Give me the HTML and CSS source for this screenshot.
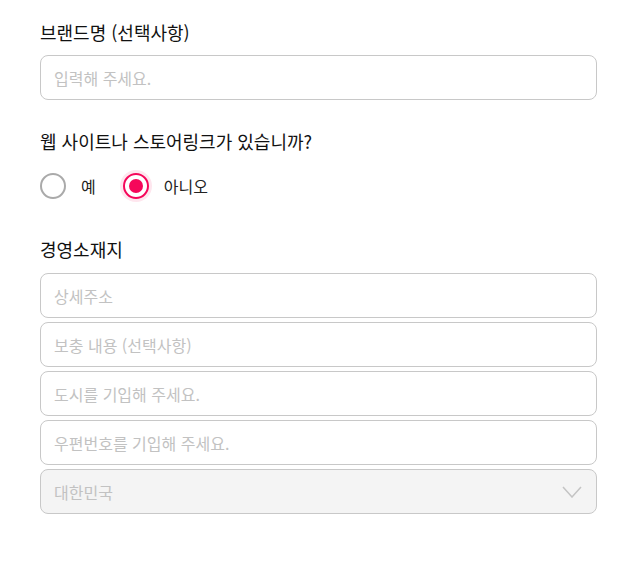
FILE: index.html
```html
<!DOCTYPE html>
<html lang="ko">
  <head>
    <meta charset="UTF-8" />
    <meta name="viewport" content="width=device-width, initial-scale=1.0" />
    <title>브랜드 정보</title>
    <link rel="stylesheet" href="styles.css">
  </head>
  <body>
    <form class="container">
      <div class="field">
        <label class="title" for="brand">브랜드명 (선택사항)</label>
        <input type="text" id="brand" class="input" placeholder="입력해 주세요." />
      </div>

      <div class="field field-radio">
        <p class="title">웹 사이트나 스토어링크가 있습니까?</p>
        <div class="radios">
          <label class="radio">
            <input type="radio" name="site" value="yes" />
            <span class="circle"></span>
            <span class="radio-text">예</span>
          </label>
          <label class="radio">
            <input type="radio" name="site" value="no" checked />
            <span class="circle"></span>
            <span class="radio-text">아니오</span>
          </label>
        </div>
      </div>

      <div class="field field-address">
        <p class="title">경영소재지</p>
        <div class="stack">
          <input type="text" class="input" placeholder="상세주소" />
          <input type="text" class="input" placeholder="보충 내용 (선택사항)" />
          <input type="text" class="input" placeholder="도시를 기입해 주세요." />
          <input type="text" class="input" placeholder="우편번호를 기입해 주세요." />
          <div class="select">
            <span>대한민국</span>
            <svg width="20" height="12" viewBox="0 0 20 12">
              <path d="M1 1 L10 11 L19 1" fill="none" stroke="#c4c4c4" stroke-width="1.5" />
            </svg>
          </div>
        </div>
      </div>
    </form>
  </body>
</html>
```

FILE: styles.css
```css
body {
  font-family: "Noto Sans CJK KR", "Noto Sans", sans-serif;
  background-color: #fff;
  color: #222;
  margin: 0;
  padding: 0;
}
.container {
  width: 557px;
  padding: 20px 0 0 40px;
}
.field {
  margin-bottom: 29px;
}
.field-radio {
  margin-bottom: 38px;
}
.title {
  display: block;
  margin: 0 0 11px;
  font-size: 18px;
  line-height: 24px;
  font-weight: 400;
  color: #111;
}
.field-radio .title {
  margin-bottom: 20px;
}
.field-address .title {
  margin-bottom: 12px;
}
.input {
  display: block;
  box-sizing: border-box;
  width: 100%;
  height: 45px;
  padding: 0 13px;
  border: 1px solid #c8c8c8;
  border-radius: 8px;
  font-family: inherit;
  font-size: 16px;
  color: #222;
  background: #fff;
  outline: none;
}
.input::placeholder {
  color: #c2c2c2;
}
.stack {
  display: flex;
  flex-direction: column;
  gap: 4px;
}
.select {
  box-sizing: border-box;
  height: 45px;
  padding: 0 14px 0 13px;
  border: 1px solid #c8c8c8;
  border-radius: 8px;
  background: #f4f4f4;
  display: flex;
  align-items: center;
  justify-content: space-between;
  font-size: 16px;
  color: #c2c2c2;
}
.radios {
  display: flex;
  gap: 27px;
  height: 26px;
}
.radio {
  display: flex;
  align-items: center;
  gap: 15px;
  font-size: 16px;
  color: #222;
  cursor: pointer;
}
.radio input {
  display: none;
}
.circle {
  box-sizing: border-box;
  width: 26px;
  height: 26px;
  border: 2px solid #aaa;
  border-radius: 50%;
  display: flex;
  align-items: center;
  justify-content: center;
}
.radio input:checked + .circle {
  border-color: #f5075a;
  box-shadow: 0 0 0 3px rgba(245, 7, 90, 0.1);
}
.radio input:checked + .circle::after {
  content: "";
  width: 14px;
  height: 14px;
  border-radius: 50%;
  background: #f5075a;
}
```
